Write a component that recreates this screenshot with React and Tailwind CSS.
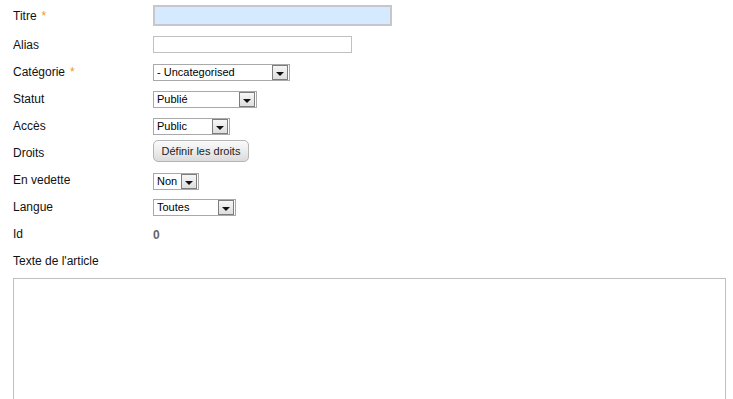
function Arrow() {
  return (
    <span className="flex h-[15px] w-[16px] items-end justify-center border border-[#7d7d7d] bg-gradient-to-b from-[#f6f6f6] to-[#dedede] pb-[3px]">
      <span className="h-0 w-0 border-x-[4px] border-t-[4px] border-x-transparent border-t-[#111]" />
    </span>
  );
}

function Select({ value, width }) {
  return (
    <div className={`flex h-[17px] items-center border border-[#a9a9a9] bg-white pl-[3px] pr-px ${width}`}>
      <span className="flex-1 text-[11px] leading-none text-black">{value}</span>
      <Arrow />
    </div>
  );
}

function Row({ label, required, height = 'h-[27px]', children }) {
  return (
    <div className={`flex items-center ${height}`}>
      <div className="w-[153px] pl-[13px] text-[12px] text-[#111]">
        {label}
        {required && <span className="ml-[5px] text-[#f0962a]">*</span>}
      </div>
      {children}
    </div>
  );
}

export default function App() {
  return (
    <div className="h-[399px] overflow-hidden bg-white font-['Liberation_Sans',Arial,sans-serif]">
      <Row label="Titre" required height="h-[31px]">
        <input type="text" className="h-[21px] w-[239px] border-2 border-[#c4c8cc] bg-[#d5eaff] outline-none" />
      </Row>
      <Row label="Alias">
        <input type="text" className="h-[17px] w-[199px] border border-[#c0c0c0] bg-white outline-none" />
      </Row>
      <Row label="Catégorie" required>
        <div className="mt-[2px]"><Select value="- Uncategorised" width="w-[137px]" /></div>
      </Row>
      <Row label="Statut">
        <div className="mt-[2px]"><Select value="Publié" width="w-[104px]" /></div>
      </Row>
      <Row label="Accès">
        <div className="mt-[2px]"><Select value="Public" width="w-[77px]" /></div>
      </Row>
      <Row label="Droits">
        <button type="button" className="-mt-[3px] h-[22px] w-[96px] rounded-[5px] border border-[#b5b5b5] bg-gradient-to-b from-[#fbfbfb] to-[#dcdcdc] text-[11px] text-[#222]">
          Définir les droits
        </button>
      </Row>
      <Row label="En vedette">
        <div className="mt-[3px]"><Select value="Non" width="w-[46px]" /></div>
      </Row>
      <Row label="Langue">
        <div className="mt-px"><Select value="Toutes" width="w-[83px]" /></div>
      </Row>
      <Row label="Id">
        <span className="mt-[3px] text-[12px] font-bold text-[#666]">0</span>
      </Row>
      <Row label="Texte de l'article" />
      <div className="mt-[4px] pl-[13px]">
        <textarea className="block h-[200px] w-[713px] resize-none border border-[#c0c0c0] bg-white outline-none" />
      </div>
    </div>
  );
}
